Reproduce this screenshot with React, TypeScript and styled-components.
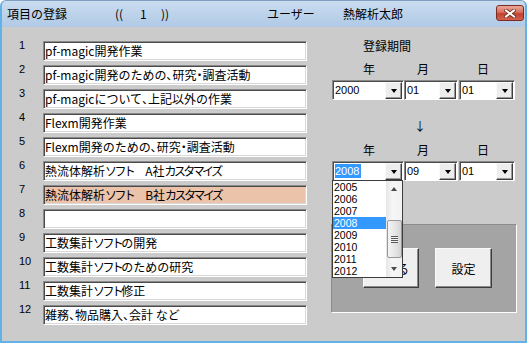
import styled, { createGlobalStyle } from "styled-components";

const items = [
  "pf-magic開発作業",
  "pf-magic開発のための、研究・調査活動",
  "pf-magicについて、上記以外の作業",
  "Flexm開発作業",
  "Flexm開発のための、研究・調査活動",
  "熱流体解析ソフト　A社カスタマイズ",
  "熱流体解析ソフト　B社カスタマイズ",
  "",
  "工数集計ソフトの開発",
  "工数集計ソフトのための研究",
  "工数集計ソフト修正",
  "雑務、物品購入、会計 など",
];

const years = ["2005", "2006", "2007", "2008", "2009", "2010", "2011", "2012"];

const GlobalStyle = createGlobalStyle`
  * { box-sizing: border-box; }
  html, body { margin: 0; padding: 0; background: #ffffff; }
  body {
    font-family: "Noto Sans CJK JP", "Noto Sans", sans-serif;
    font-size: 12px;
    color: #000;
  }
`;

const Window = styled.div`
  width: 527px;
  height: 343px;
  display: flex;
  flex-direction: column;
  background: #cbcbcb;
  border: 2px solid #62b2e6;
  border-top: 1px solid #7f9fc2;
  border-radius: 6px 6px 0 0;
  overflow: hidden;
`;

const TitleBar = styled.div`
  height: 26px;
  flex: none;
  display: flex;
  align-items: center;
  padding-left: 5px;
  background: linear-gradient(to bottom, #cadcf0 0%, #bdd3eb 50%, #b1c9e5 100%);
`;

const TitleText = styled.span<{ $w?: number }>`
  flex: ${(p) => (p.$w ? "none" : "1")};
  width: ${(p) => (p.$w ? `${p.$w}px` : "auto")};
  line-height: 14px;
  white-space: pre;
`;

const CloseButton = styled.div`
  width: 28px;
  height: 16px;
  margin-right: 1px;
  align-self: flex-start;
  margin-top: 4px;
  border: 1px solid #7b2b22;
  border-radius: 3px;
  background: linear-gradient(to bottom, #eba899 0%, #d8705f 45%, #c2412f 55%, #d2624f 100%);
  display: flex;
  align-items: center;
  justify-content: center;
`;

const Body = styled.div`
  flex: 1;
  display: flex;
`;

const ItemList = styled.div`
  display: flex;
  flex-direction: column;
  gap: 4px;
  padding: 14px 0 0 16px;
`;

const ItemRow = styled.div`
  display: flex;
  align-items: flex-start;
`;

const ItemNo = styled.div`
  width: 25px;
  font-family: "Liberation Sans", Arial, sans-serif;
  font-size: 11px;
  line-height: 13px;
  margin-top: -2px;
  padding-left: 1px;
`;

const TextBox = styled.div<{ $marked?: boolean }>`
  width: 264px;
  height: 20px;
  padding: 0 0 0 1px;
  line-height: 17px;
  white-space: pre;
  overflow: hidden;
  background: ${(p) => (p.$marked ? "#ebc3ab" : "#ffffff")};
  border: 1px solid;
  border-color: #8a8a8a #ffffff #ffffff #8a8a8a;
  box-shadow: inset 1px 1px 0 #4a4a4a, inset -1px -1px 0 #d8d8d8;
`;

const Kata = styled.span`
  letter-spacing: -2.6px;
`;

const Punct = styled.span`
  font-feature-settings: "palt";
`;

const renderText = (text: string) =>
  text
    .split(/([\u30A1-\u30FC]+|[、・]+)/)
    .filter(Boolean)
    .map((part, i) => {
      if (/^[、・]+$/.test(part)) return <Punct key={i}>{part}</Punct>;
      if (/^[\u30A1-\u30FC]+$/.test(part)) return <Kata key={i}>{part}</Kata>;
      return <span key={i}>{part}</span>;
    });

const Period = styled.div`
  margin-left: 25px;
  padding-top: 12px;
  display: flex;
  flex-direction: column;
`;

const Heading = styled.div<{ $top?: number; $left: number }>`
  line-height: 14px;
  margin-top: ${(p) => p.$top ?? 0}px;
  padding-left: ${(p) => p.$left}px;
`;

const DateGrid = styled.div<{ $top: number }>`
  display: grid;
  grid-template-columns: 72px 55px 56px;
  margin-top: ${(p) => p.$top}px;
`;

const DateLabel = styled.div<{ $left: number }>`
  line-height: 14px;
  padding-left: ${(p) => p.$left}px;
`;

const Combo = styled.div<{ $w: number }>`
  position: relative;
  width: ${(p) => p.$w}px;
  height: 20px;
  display: flex;
  align-items: center;
  padding: 1px;
  background: #ffffff;
  border: 1px solid;
  border-color: #8a8a8a #ffffff #ffffff #8a8a8a;
  box-shadow: inset 1px 1px 0 #4a4a4a;
`;

const ComboValue = styled.div`
  flex: 1;
  font-family: "Liberation Sans", Arial, sans-serif;
  font-size: 11px;
  line-height: 16px;
  padding-left: 1px;
`;

const Selected = styled.span`
  display: inline-block;
  line-height: 14px;
  background: #3399ff;
  color: #ffffff;
  padding-right: 2px;
`;

const DropButton = styled.div`
  flex: none;
  width: 17px;
  height: 17px;
  margin-top: 1px;
  display: flex;
  align-items: center;
  justify-content: center;
  background: #ededed;
  border: 1px solid;
  border-color: #fafafa #3c3c3c #3c3c3c #fafafa;
  box-shadow: inset -1px -1px 0 #9a9a9a;
`;

const Triangle = styled.div<{ $up?: boolean; $color?: string }>`
  width: 1px;
  height: 0;
  border-left: 3px solid transparent;
  border-right: 3px solid transparent;
  ${(p) =>
    p.$up
      ? `border-bottom: 4px solid ${p.$color ?? "#000"};`
      : `border-top: 4px solid ${p.$color ?? "#000"};`}
`;

const DropList = styled.div`
  position: absolute;
  top: 18px;
  left: -1px;
  width: 71px;
  height: 98px;
  z-index: 2;
  display: flex;
  background: #ffffff;
  border: 1px solid #3c3c3c;
`;

const Options = styled.div`
  flex: 1;
  display: flex;
  flex-direction: column;
`;

const Option = styled.div<{ $active?: boolean }>`
  height: 12px;
  font-family: "Liberation Sans", Arial, sans-serif;
  font-size: 10.5px;
  line-height: 12px;
  padding-left: 1px;
  background: ${(p) => (p.$active ? "#3399ff" : "transparent")};
  color: ${(p) => (p.$active ? "#ffffff" : "#000000")};
`;

const ScrollBar = styled.div`
  width: 16px;
  display: flex;
  flex-direction: column;
  background: linear-gradient(to right, #e6e6e6, #f6f6f6 40%, #f2f2f2);
`;

const ScrollArrow = styled.div`
  height: 16px;
  flex: none;
  display: flex;
  align-items: center;
  justify-content: center;
`;

const ScrollTrack = styled.div`
  flex: 1;
  display: flex;
  flex-direction: column;
  align-items: center;
`;

const Thumb = styled.div`
  width: 15px;
  height: 38px;
  margin-top: 23px;
  display: flex;
  align-items: center;
  justify-content: center;
  border: 1px solid #979797;
  border-radius: 2px;
  background: linear-gradient(to right, #f4f4f4, #e6e6e6 50%, #d4d4d4);
`;

const Grip = styled.div`
  width: 7px;
  height: 7px;
  background: repeating-linear-gradient(to bottom, #5a5a5a 0 1px, #f2f2f2 1px 2px);
`;

const ButtonPanel = styled.div`
  margin-top: 43px;
  margin-left: -1px;
  width: 186px;
  height: 89px;
  display: flex;
  gap: 16px;
  padding: 23px 0 0 31px;
  background: #a4a4a4;
  border: 1px solid;
  border-color: #8c8c8c #ffffff #ffffff #8c8c8c;
`;

const PanelButton = styled.button<{ $w: number }>`
  width: ${(p) => p.$w}px;
  height: 40px;
  padding: 0;
  font-family: "Noto Sans CJK JP", "Noto Sans", sans-serif;
  font-size: 12px;
  color: #000;
  background: #efefef;
  border: 1px solid;
  border-color: #fafafa #3c3c3c #3c3c3c #fafafa;
  box-shadow: inset -1px -1px 0 #8a8a8a;
`;

const CloseIcon = () => (
  <svg width="12" height="9" viewBox="0 0 12 9">
    <path d="M2 1.5 L10 7.5 M10 1.5 L2 7.5" stroke="#6b2a20" strokeWidth="3.6" strokeLinecap="square" />
    <path d="M2 1.5 L10 7.5 M10 1.5 L2 7.5" stroke="#ffffff" strokeWidth="2" strokeLinecap="square" />
  </svg>
);

const DateLabels = ({ top }: { top: number }) => (
  <DateGrid $top={top}>
    <DateLabel $left={31}>年</DateLabel>
    <DateLabel $left={13}>月</DateLabel>
    <DateLabel $left={18}>日</DateLabel>
  </DateGrid>
);

const DateCombo = ({ w, value }: { w: number; value: string }) => (
  <Combo $w={w}>
    <ComboValue>{value}</ComboValue>
    <DropButton>
      <Triangle />
    </DropButton>
  </Combo>
);

export default function App() {
  return (
    <>
      <GlobalStyle />
      <Window>
        <TitleBar>
          <TitleText $w={108}>項目の登録</TitleText>
          <TitleText $w={25}>((</TitleText>
          <TitleText $w={21}>1</TitleText>
          <TitleText $w={106}>))</TitleText>
          <TitleText $w={76}>ユーザー</TitleText>
          <TitleText>熱解析太郎</TitleText>
          <CloseButton>
            <CloseIcon />
          </CloseButton>
        </TitleBar>
        <Body>
          <ItemList>
            {items.map((text, i) => (
              <ItemRow key={i}>
                <ItemNo>{i + 1}</ItemNo>
                <TextBox $marked={i === 6}>{renderText(text)}</TextBox>
              </ItemRow>
            ))}
          </ItemList>
          <Period>
            <Heading $left={31}>登録期間</Heading>
            <DateLabels top={9} />
            <DateGrid $top={4}>
              <DateCombo w={72} value="2000" />
              <DateCombo w={54} value="01" />
              <DateCombo w={56} value="01" />
            </DateGrid>
            <Heading $top={19} $left={82}>↓</Heading>
            <DateLabels top={10} />
            <DateGrid $top={4}>
              <Combo $w={72}>
                <ComboValue>
                  <Selected>2008</Selected>
                </ComboValue>
                <DropButton>
                  <Triangle />
                </DropButton>
                <DropList>
                  <Options>
                    {years.map((y) => (
                      <Option key={y} $active={y === "2008"}>
                        {y}
                      </Option>
                    ))}
                  </Options>
                  <ScrollBar>
                    <ScrollArrow>
                      <Triangle $up $color="#4a4a4a" />
                    </ScrollArrow>
                    <ScrollTrack>
                      <Thumb>
                        <Grip />
                      </Thumb>
                    </ScrollTrack>
                    <ScrollArrow>
                      <Triangle $color="#4a4a4a" />
                    </ScrollArrow>
                  </ScrollBar>
                </DropList>
              </Combo>
              <DateCombo w={54} value="09" />
              <DateCombo w={56} value="01" />
            </DateGrid>
            <ButtonPanel>
              <PanelButton $w={56}>閉じる</PanelButton>
              <PanelButton $w={57}>設定</PanelButton>
            </ButtonPanel>
          </Period>
        </Body>
      </Window>
    </>
  );
}
